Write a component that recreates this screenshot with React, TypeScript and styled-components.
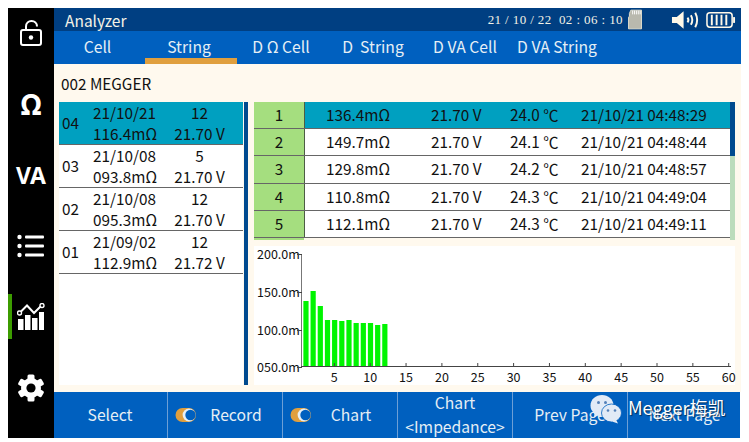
import React from "react";
import styled, { createGlobalStyle } from "styled-components";

const Global = createGlobalStyle`
  html, body { margin: 0; padding: 0; background: #fff; }
  body { font-family: "Noto Sans CJK SC", "Noto Sans", sans-serif; }
`;

const Screen = styled.div`
  position: relative;
  margin: 8px 0 0 8px;
  width: 733px;
  height: 430px;
  display: flex;
  overflow: hidden;
`;

const Sidebar = styled.nav`
  width: 46px;
  flex: none;
  background: #000;
  display: flex;
  flex-direction: column;
  gap: 26px;
  padding-top: 2px;
  box-sizing: border-box;
`;

const SideItem = styled.div<{ $active?: boolean; $big?: boolean }>`
  height: 45px;
  display: flex;
  align-items: center;
  justify-content: center;
  color: #fff;
  font: bold ${(p) => (p.$big ? 28 : 23)}px "Noto Sans", sans-serif;
  box-shadow: ${(p) => (p.$active ? "inset 4px 0 0 #3c9c00" : "none")};
`;

const Main = styled.div`
  flex: 1;
  min-width: 0;
  display: flex;
  flex-direction: column;
`;

const Header = styled.header`
  height: 23px;
  flex: none;
  background: #003f82;
  color: #f4f2e6;
  display: flex;
  align-items: center;
  padding: 0 5px 0 11px;
  font-size: 15.5px;
`;

const Title = styled.div`
  flex: 1;
`;

const Clock = styled.div`
  font: 13px "Liberation Serif", serif;
  letter-spacing: 0.4px;
  white-space: pre;
  margin-right: 5px;
`;

const StatusIcons = styled.div`
  display: flex;
  align-items: center;
  gap: 4px;
`;

const StatusGap = styled.div`
  width: 21px;
`;

const Tabs = styled.div`
  height: 33px;
  flex: none;
  background: #0060bf;
  display: flex;
`;

const Tab = styled.div<{ $active?: boolean; $first?: boolean }>`
  width: ${(p) => (p.$first ? 91 : 92)}px;
  height: 33px;
  box-sizing: border-box;
  padding-right: 4px;
  text-align: center;
  color: #e6eff5;
  font-size: 15.7px;
  line-height: 32px;
  white-space: pre;
  border-bottom: 6px solid ${(p) => (p.$active ? "#e09f3e" : "transparent")};
`;

const Body = styled.div`
  flex: 1;
  min-height: 0;
  background: #fff9ee;
  padding: 0 6px 7px 5px;
  display: flex;
  flex-direction: column;
`;

const Device = styled.div`
  height: 38px;
  flex: none;
  font-size: 15.3px;
  line-height: 38px;
  color: #111;
  padding-left: 2px;
`;

const Panels = styled.div`
  flex: 1;
  min-height: 0;
  display: flex;
`;

const ListPanel = styled.div`
  width: 184px;
  flex: none;
  background: #fff;
`;

const Scroll = styled.div`
  width: 4px;
  flex: none;
  background: #004a8f;
  margin: 0 6px 0 1px;
`;

const ListRow = styled.div<{ $active?: boolean }>`
  height: 43px;
  box-sizing: border-box;
  background: ${(p) => (p.$active ? "#00a0c0" : "#fff")};
  border-bottom: 1px solid #666;
  display: grid;
  grid-template-columns: 31px 59px 1fr;
  grid-template-rows: 21px 21px;
  align-items: center;
  font-size: 15.3px;
  color: #111;
  padding-left: 3px;
`;

const ListId = styled.div`
  grid-row: 1 / span 2;
  padding-bottom: 3px;
`;

const ListCell = styled.div<{ $right?: boolean }>`
  text-align: center;
  white-space: nowrap;
  line-height: 21px;
  padding-left: ${(p) => (p.$right ? 4 : 0)}px;
`;

const RightPanel = styled.div`
  flex: 1;
  min-width: 0;
  display: flex;
  flex-direction: column;
  gap: 6px;
`;

const TableWrap = styled.div`
  height: 138px;
  flex: none;
  display: flex;
`;

const Table = styled.div`
  width: 476px;
  flex: none;
  display: flex;
  flex-direction: column;
`;

const Row = styled.div<{ $active?: boolean }>`
  height: 27.2px;
  box-sizing: border-box;
  display: grid;
  grid-template-columns: 50px 1px 126px 79px 71px 1fr;
  align-items: center;
  background: ${(p) => (p.$active ? "#00a0c0" : "#fff")};
  border-bottom: 1px solid #666;
  color: #111;
  font-size: 15.3px;
  white-space: nowrap;
`;

const RowNo = styled.div`
  background: #a5de7f;
  height: 100%;
  border-right: 1px solid #4d5d45;
  text-align: center;
  line-height: 25px;
  margin-right: -1px;
  box-sizing: border-box;
`;

const ValueCell = styled.div<{ $pad?: number }>`
  padding-left: ${(p) => p.$pad ?? 0}px;
  line-height: 25px;
  align-self: start;
`;

const TableBottom = styled.div`
  height: 2px;
  width: 50px;
  background: #a5de7f;
`;

const Track = styled.div`
  width: 5px;
  flex: none;
  display: flex;
  flex-direction: column;
  background: #bcdcbc;
`;

const Thumb = styled.div`
  height: 54px;
  background: #004a8f;
`;

const ChartBox = styled.div`
  flex: 1;
  min-height: 0;
  background: #fff;
  width: 481px;
`;

const ChartSvg = styled.svg`
  display: block;
  overflow: visible;
`;

const Bottom = styled.footer`
  height: 46px;
  flex: none;
  background: #0060bf;
  display: flex;
  margin-right: 1px;
  gap: 1px;
  color: #e6eff5;
  font-size: 15.7px;
`;

const SoftKey = styled.div<{ $w: number }>`
  width: ${(p) => p.$w}px;
  flex: none;
  display: flex;
  align-items: center;
  justify-content: center;
  box-sizing: border-box;
  padding: 0 7px 0 6px;
  border-right: 1px solid #6d9fd6;
  text-align: center;
  line-height: 24px;
  white-space: nowrap;
`;

const KeyLabel = styled.div`
  flex: 1;
`;

const Watermark = styled.div`
  position: absolute;
  left: 582px;
  top: 386px;
  display: flex;
  align-items: flex-start;
  gap: 6px;
  color: #fff;
  font-size: 18px;
  line-height: 26px;
  text-shadow: 1px 1px 1px rgba(0, 0, 0, 0.55);
  white-space: nowrap;
`;

const Toggle = () => (
  <svg width="22" height="16" viewBox="0 0 22 16">
    <rect x="0.5" y="1" width="20.5" height="14" rx="7" fill="#e09f3e" />
    <circle cx="14" cy="8" r="6.4" fill="#e6eff5" />
    <circle cx="15.5" cy="8" r="5.2" fill="#0060bf" />
  </svg>
);

const LockIcon = () => (
  <svg width="24" height="28" viewBox="0 0 24 28" fill="none" stroke="#fff" strokeWidth="2">
    <path d="M7 11V7.5C7 4 9.5 2 12.5 2S18 4 18 7.5" />
    <rect x="2" y="11" width="20" height="15" rx="2" />
    <circle cx="12" cy="18.5" r="2.2" fill="#fff" stroke="none" />
  </svg>
);

const ListIcon = () => (
  <svg width="28" height="24" viewBox="0 0 28 24" fill="#fff">
    <circle cx="2.5" cy="3" r="2.2" />
    <circle cx="2.5" cy="12" r="2.2" />
    <circle cx="2.5" cy="21" r="2.2" />
    <rect x="8" y="1.5" width="19" height="3" rx="1" />
    <rect x="8" y="10.5" width="19" height="3" rx="1" />
    <rect x="8" y="19.5" width="19" height="3" rx="1" />
  </svg>
);

const ChartIcon = () => (
  <svg width="28" height="28" viewBox="0 0 28 28">
    <rect x="1" y="16" width="5.5" height="11" fill="#fff" />
    <rect x="8" y="12" width="5.5" height="15" fill="#fff" />
    <rect x="15" y="15" width="5.5" height="12" fill="#fff" />
    <rect x="22" y="9" width="5" height="18" fill="#fff" />
    <path d="M3 9.5 L10 2.5 L17 10 L24.5 2.5" fill="none" stroke="#fff" strokeWidth="2" />
    <circle cx="2.5" cy="10" r="2" fill="#000" stroke="#fff" strokeWidth="1.4" />
    <circle cx="25" cy="2.5" r="2" fill="#000" stroke="#fff" strokeWidth="1.4" />
  </svg>
);

const GearIcon = () => {
  const teeth = [0, 60, 120, 180, 240, 300];
  return (
    <svg width="28" height="28" viewBox="0 0 28 28">
      {teeth.map((a) => (
        <rect key={a} x="10.5" y="0.5" width="7" height="7" rx="1.5" fill="#fff" transform={`rotate(${a} 14 14)`} />
      ))}
      <circle cx="14" cy="14" r="10" fill="#fff" />
      <circle cx="14" cy="14" r="4.6" fill="#000" />
    </svg>
  );
};

const SdIcon = () => (
  <svg width="14" height="21" viewBox="0 0 15 21">
    <path d="M3 .5H14.5V20.5H.5V8L1.5 7V4L3 .5Z" fill="#b9b9ae" stroke="#e6e2d0" />
    <path d="M5 1v4M7 1v4M9 1v4M11 1v4M13 1v4" stroke="#fff" strokeWidth="1" />
  </svg>
);

const SoundIcon = () => (
  <svg width="31" height="20" viewBox="0 0 32 20" fill="#fff8e8">
    <path d="M1 7H6L13 1V19L6 13H1Z" />
    <path d="M17 7.5Q19 10 17 12.5M20.5 5Q23.5 10 20.5 15M25 2.5Q29 10 25 17.5" fill="none" stroke="#fff8e8" strokeWidth="2" />
  </svg>
);

const BatteryIcon = () => (
  <svg width="30" height="18" viewBox="0 0 31 18" fill="none">
    <rect x="1" y="1.5" width="26" height="15" rx="3" stroke="#fff8e8" strokeWidth="1.6" />
    <path d="M28 6h2v6h-2z" fill="#fff8e8" />
    <path d="M6 3.5v11M11 3.5v11M16 3.5v11M21 3.5v11" stroke="#fff8e8" strokeWidth="2" />
  </svg>
);

const WeChatIcon = () => (
  <svg width="32" height="31" viewBox="0 0 32 30">
    <ellipse cx="12" cy="11" rx="11.5" ry="10.5" fill="#e2eaf6" />
    <path d="M5 17l-1 6 6-3z" fill="#e2eaf6" />
    <circle cx="8.5" cy="8" r="1.5" fill="#5580b8" />
    <circle cx="15.5" cy="8" r="1.5" fill="#5580b8" />
    <ellipse cx="21.5" cy="18.5" rx="10" ry="9" fill="#e2eaf6" stroke="#0060bf" strokeWidth=".8" />
    <path d="M26 25l2 4-6-2z" fill="#e2eaf6" />
    <circle cx="18" cy="16" r="1.3" fill="#5580b8" />
    <circle cx="25" cy="16" r="1.3" fill="#5580b8" />
  </svg>
);

const bars = [301, 291, 306, 320, 320, 321, 320, 323, 323, 323, 325, 324];
const ticks = [5, 10, 15, 20, 25, 30, 35, 40, 45, 50, 55, 60];
const yTicks: [string, number][] = [
  ["200.0m", 254],
  ["150.0m", 292],
  ["100.0m", 330],
  ["050.0m", 367],
];

// Chart box starts at page x 254, y 246.
const Chart = () => {
  const ox = 254;
  const oy = 246;
  const xOf = (n: number) => 298.5 + n * 7.17 - ox;
  const axisY = 366 - oy;
  return (
    <ChartSvg width="481" height="139" viewBox="0 0 481 139" fontFamily="'Noto Sans CJK SC', sans-serif" fontSize="13" fill="#111">
      {bars.map((top, i) => (
        <rect key={i} x={xOf(i + 1) - 2.3} y={top - oy} width={5.2} height={366 - top} fill="#00f500" />
      ))}
      <line x1={47.5} y1={8} x2={47.5} y2={axisY + 1} stroke="#777" strokeWidth="1" />
      <line x1={47} y1={axisY + 0.5} x2={477} y2={axisY + 0.5} stroke="#444" strokeWidth="1" />
      {yTicks.map(([label, y]) => (
        <g key={label}>
          <text x={3} y={y - oy + 4.5} fontSize="12.5">{label}</text>
          <line x1={43} y1={y - oy + 0.5} x2={48} y2={y - oy + 0.5} stroke="#444" />
        </g>
      ))}
      {ticks.map((t) => (
        <g key={t}>
          <line x1={xOf(t)} y1={axisY - 3} x2={xOf(t)} y2={axisY} stroke="#444" />
          <text x={xOf(t)} y={axisY + 16} textAnchor="middle" fontSize="12.5">{t}</text>
        </g>
      ))}
    </ChartSvg>
  );
};

const records = [
  { id: "04", date: "21/10/21", count: "12", res: "116.4mΩ", volt: "21.70 V", active: true },
  { id: "03", date: "21/10/08", count: "5", res: "093.8mΩ", volt: "21.70 V" },
  { id: "02", date: "21/10/08", count: "12", res: "095.3mΩ", volt: "21.70 V" },
  { id: "01", date: "21/09/02", count: "12", res: "112.9mΩ", volt: "21.72 V" },
];

const rows = [
  ["1", "136.4mΩ", "21.70 V", "24.0 ℃", "21/10/21 04:48:29"],
  ["2", "149.7mΩ", "21.70 V", "24.1 ℃", "21/10/21 04:48:44"],
  ["3", "129.8mΩ", "21.70 V", "24.2 ℃", "21/10/21 04:48:57"],
  ["4", "110.8mΩ", "21.70 V", "24.3 ℃", "21/10/21 04:49:04"],
  ["5", "112.1mΩ", "21.70 V", "24.3 ℃", "21/10/21 04:49:11"],
];

const tabs = ["Cell", "String", "D Ω Cell", "D  String", "D VA Cell", "D VA String"];

export default function App() {
  return (
    <>
      <Global />
      <Screen>
        <Sidebar>
          <SideItem><LockIcon /></SideItem>
          <SideItem $big>Ω</SideItem>
          <SideItem>VA</SideItem>
          <SideItem><ListIcon /></SideItem>
          <SideItem $active><ChartIcon /></SideItem>
          <SideItem><GearIcon /></SideItem>
        </Sidebar>
        <Main>
          <Header>
            <Title>Analyzer</Title>
            <Clock>21 / 10 / 22  02 : 06 : 10</Clock>
            <StatusIcons>
              <SdIcon />
              <StatusGap />
              <SoundIcon />
              <BatteryIcon />
            </StatusIcons>
          </Header>
          <Tabs>
            {tabs.map((t, i) => (
              <Tab key={t} $first={i === 0} $active={i === 1}>{t}</Tab>
            ))}
          </Tabs>
          <Body>
            <Device>002 MEGGER</Device>
            <Panels>
              <ListPanel>
                {records.map((r) => (
                  <ListRow key={r.id} $active={r.active}>
                    <ListId>{r.id}</ListId>
                    <ListCell>{r.date}</ListCell>
                    <ListCell $right>{r.count}</ListCell>
                    <ListCell>{r.res}</ListCell>
                    <ListCell $right>{r.volt}</ListCell>
                  </ListRow>
                ))}
              </ListPanel>
              <Scroll />
              <RightPanel>
                <TableWrap>
                  <Table>
                    {rows.map((r, i) => (
                      <Row key={r[0]} $active={i === 0}>
                        <RowNo>{r[0]}</RowNo>
                        <span />
                        <ValueCell $pad={21}>{r[1]}</ValueCell>
                        <ValueCell>{r[2]}</ValueCell>
                        <ValueCell>{r[3]}</ValueCell>
                        <ValueCell>{r[4]}</ValueCell>
                      </Row>
                    ))}
                    <TableBottom />
                  </Table>
                  <Track><Thumb /></Track>
                </TableWrap>
                <ChartBox><Chart /></ChartBox>
              </RightPanel>
            </Panels>
          </Body>
          <Bottom>
            <SoftKey $w={114}><KeyLabel>Select</KeyLabel></SoftKey>
            <SoftKey $w={114}><Toggle /><KeyLabel>Record</KeyLabel></SoftKey>
            <SoftKey $w={114}><Toggle /><KeyLabel>Chart</KeyLabel></SoftKey>
            <SoftKey $w={114}><KeyLabel>Chart<br />&lt;Impedance&gt;</KeyLabel></SoftKey>
            <SoftKey $w={114}><KeyLabel>Prev Page</KeyLabel></SoftKey>
            <SoftKey $w={113}><KeyLabel>Next Page</KeyLabel></SoftKey>
          </Bottom>
        </Main>
        <Watermark><WeChatIcon />Megger梅凯</Watermark>
      </Screen>
    </>
  );
}
